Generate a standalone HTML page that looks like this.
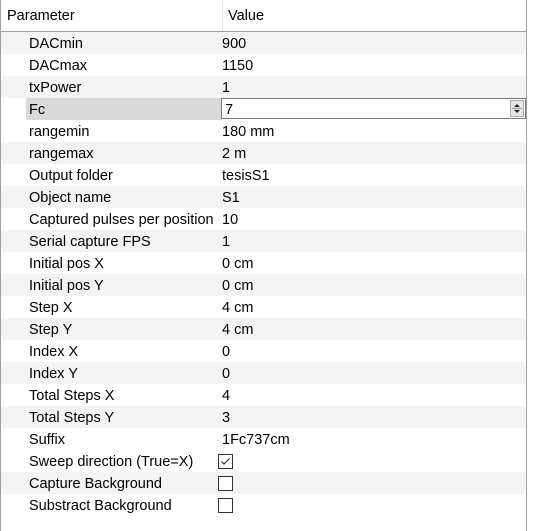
<!DOCTYPE html>
<html><head><style>
body{margin:0;width:534px;height:531px;background:#fff;font-family:"Liberation Sans",sans-serif;font-size:14.5px;color:#000;position:relative;overflow:hidden}
.frame{position:absolute;left:0;top:0;width:527px;height:531px;border-left:1px solid #a0a0a0;border-right:1px solid #a0a0a0;box-sizing:border-box;z-index:5}
.hdr{position:absolute;left:1px;top:0;width:525px;height:31px;border-bottom:1px solid #a0a0a0;background:#fff}
.hdr span{position:absolute;top:8px}
.sep{position:absolute;left:221px;top:0;width:1px;height:31px;background:#e5e5e5}
.row{position:absolute;left:1px;width:525px;height:22px;line-height:25px}
.g{background:#f4f4f4}
.p{position:absolute;left:28px}
.v{position:absolute;left:221px}
.sel{position:absolute;left:25px;width:196px;height:22px;background:#d9d9d9}
.edit{position:absolute;left:221px;top:98px;width:305px;height:21px;border:1px solid #7a7a7a;box-sizing:border-box;background:#fff;line-height:22px;padding-left:3px;z-index:6}
.spin{position:absolute;right:1px;top:1px;width:14px;height:17px;border:1px solid #adadad;box-sizing:border-box;background:#e6e6e6}
.cb{position:absolute;left:217px;top:4px;width:15px;height:15px;border:1px solid #333;box-sizing:border-box;background:#fff}
</style></head><body>
<div class="frame"></div>
<div class="hdr"><span style="left:6px">Parameter</span><div class="sep"></div><span style="left:227px">Value</span></div>
<div class="row g" style="top:32px"><span class="p">DACmin</span><span class="v">900</span></div>
<div class="row" style="top:54px"><span class="p">DACmax</span><span class="v">1150</span></div>
<div class="row g" style="top:76px"><span class="p">txPower</span><span class="v">1</span></div>
<div class="row" style="top:98px"><div class="sel"></div><span class="p">Fc</span></div>
<div class="edit">7<div class="spin"><svg width="12" height="15" style="position:absolute;left:0;top:0"><path d="M3 6L6 3L9 6Z" fill="#222"/><line x1="1" y1="7.5" x2="11" y2="7.5" stroke="#999"/><path d="M3 9L9 9L6 12Z" fill="#222"/></svg></div></div>
<div class="row" style="top:120px"><span class="p">rangemin</span><span class="v">180 mm</span></div>
<div class="row g" style="top:142px"><span class="p">rangemax</span><span class="v">2 m</span></div>
<div class="row" style="top:164px"><span class="p">Output folder</span><span class="v">tesisS1</span></div>
<div class="row g" style="top:186px"><span class="p">Object name</span><span class="v">S1</span></div>
<div class="row" style="top:208px"><span class="p">Captured pulses per position</span><span class="v">10</span></div>
<div class="row g" style="top:230px"><span class="p">Serial capture FPS</span><span class="v">1</span></div>
<div class="row" style="top:252px"><span class="p">Initial pos X</span><span class="v">0 cm</span></div>
<div class="row g" style="top:274px"><span class="p">Initial pos Y</span><span class="v">0 cm</span></div>
<div class="row" style="top:296px"><span class="p">Step X</span><span class="v">4 cm</span></div>
<div class="row g" style="top:318px"><span class="p">Step Y</span><span class="v">4 cm</span></div>
<div class="row" style="top:340px"><span class="p">Index X</span><span class="v">0</span></div>
<div class="row g" style="top:362px"><span class="p">Index Y</span><span class="v">0</span></div>
<div class="row" style="top:384px"><span class="p">Total Steps X</span><span class="v">4</span></div>
<div class="row g" style="top:406px"><span class="p">Total Steps Y</span><span class="v">3</span></div>
<div class="row" style="top:428px"><span class="p">Suffix</span><span class="v">1Fc737cm</span></div>
<div class="row" style="top:450px"><span class="p">Sweep direction (True=X)</span><div class="cb"><svg width="13" height="13" style="position:absolute;left:0;top:0"><path d="M2.5 6.5L5 9L10.5 3.5" fill="none" stroke="#333" stroke-width="1.2"/></svg></div></div>
<div class="row g" style="top:472px"><span class="p">Capture Background</span><div class="cb"></div></div>
<div class="row" style="top:494px"><span class="p">Substract Background</span><div class="cb"></div></div>
</body></html>
